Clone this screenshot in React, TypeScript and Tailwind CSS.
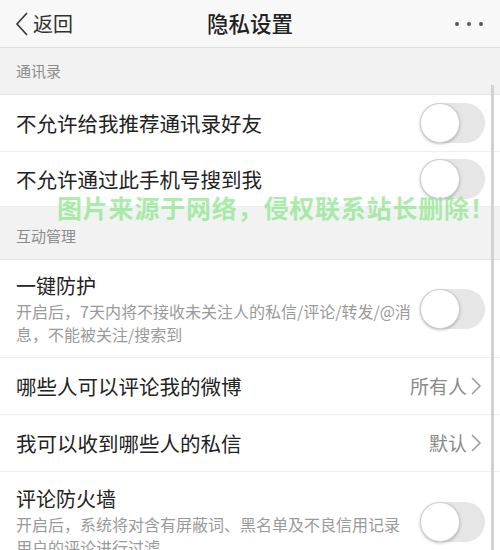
const font = { fontFamily: '"Noto Sans CJK SC", "Noto Sans", sans-serif' }

function Toggle() {
  return (
    <div className="w-[65px] h-[40px] rounded-full bg-[#e6e6e6] relative shrink-0">
      <div className="absolute left-0 top-0 w-[40px] h-[40px] rounded-full bg-white border border-[#d0d0d0] shadow-[0_1px_3px_rgba(0,0,0,0.25)]" />
    </div>
  )
}

function Chevron() {
  return (
    <svg width="12" height="20" viewBox="0 0 12 20" className="ml-[3px]">
      <path d="M2 2 L10 10 L2 18" fill="none" stroke="#999" strokeWidth="1.5" />
    </svg>
  )
}

function SectionTitle({ title, h }: { title: string; h: string }) {
  return (
    <div className={`${h} bg-[#f2f2f2] flex items-end pb-[12px] px-[16px] text-[15px] text-[#8c8c8c] border-b border-[#e4e4e4]`}>
      {title}
    </div>
  )
}

function ToggleRow({ title, h }: { title: string; h: string }) {
  return (
    <div className={`${h} flex items-center justify-between pl-[16px] pr-[15px] border-b border-[#eeeeee]`}>
      <span className="text-[20.5px] text-[#222]">{title}</span>
      <Toggle />
    </div>
  )
}

function LinkRow({ title, value }: { title: string; value: string }) {
  return (
    <div className="h-[57px] flex items-center justify-between pl-[16px] pr-[18px] border-b border-[#eeeeee]">
      <span className="text-[20.5px] text-[#222]">{title}</span>
      <span className="flex items-center text-[19px] text-[#8a8a8a]">
        {value}
        <Chevron />
      </span>
    </div>
  )
}

function DescRow({ title, lines, h }: { title: string; lines: string[]; h: string }) {
  return (
    <div className={`${h} flex items-center justify-between pl-[16px] pr-[15px] border-b border-[#eeeeee]`}>
      <div className="flex flex-col">
        <span className="text-[20px] leading-[28px] text-[#222]">{title}</span>
        {lines.map((l, i) => (
          <span key={i} className="text-[16px] leading-[23px] text-[#9a9a9a] whitespace-nowrap">
            {l}
          </span>
        ))}
      </div>
      <Toggle />
    </div>
  )
}

export default function App() {
  return (
    <div className="w-[500px] h-[550px] overflow-hidden bg-white relative" style={font}>
      <div className="h-[48px] bg-[#f8f8f8] border-b border-[#dedede] flex items-center justify-between px-[15px] relative">
        <div className="flex items-center">
          <svg width="14" height="24" viewBox="0 0 14 24">
            <path d="M12 1 L2 12 L12 23" fill="none" stroke="#333" strokeWidth="1.6" />
          </svg>
          <span className="ml-[4px] text-[20px] text-[#333]">返回</span>
        </div>
        <span className="absolute left-1/2 -translate-x-1/2 text-[21.5px] font-medium text-[#222]">隐私设置</span>
        <div className="flex gap-[8px] pr-[2px]">
          <span className="w-[4px] h-[4px] rounded-full bg-[#555]" />
          <span className="w-[4px] h-[4px] rounded-full bg-[#555]" />
          <span className="w-[4px] h-[4px] rounded-full bg-[#555]" />
        </div>
      </div>

      <SectionTitle title="通讯录" h="h-[47px]" />
      <ToggleRow title="不允许给我推荐通讯录好友" h="h-[57px]" />
      <ToggleRow title="不允许通过此手机号搜到我" h="h-[55px]" />

      <SectionTitle title="互动管理" h="h-[53px]" />
      <DescRow
        title="一键防护"
        h="h-[98px]"
        lines={['开启后，7天内将不接收未关注人的私信/评论/转发/@消', '息，不能被关注/搜索到']}
      />
      <LinkRow title="哪些人可以评论我的微博" value="所有人" />
      <LinkRow title="我可以收到哪些人的私信" value="默认" />
      <DescRow
        title="评论防火墙"
        h="h-[100px]"
        lines={['开启后，系统将对含有屏蔽词、黑名单及不良信用记录', '用户的评论进行过滤']}
      />

      {/* scrollbar */}
      <div className="absolute right-[6px] top-[85px] bottom-0 w-[3px] bg-[#d2d2d2]" />

      {/* watermark */}
      <div className="absolute left-[57px] top-[189px] text-[25px] font-bold text-[#8ee68e]/75 whitespace-nowrap tracking-[0.8px]">
        图片来源于网络，侵权联系站长删除！
      </div>
    </div>
  )
}
